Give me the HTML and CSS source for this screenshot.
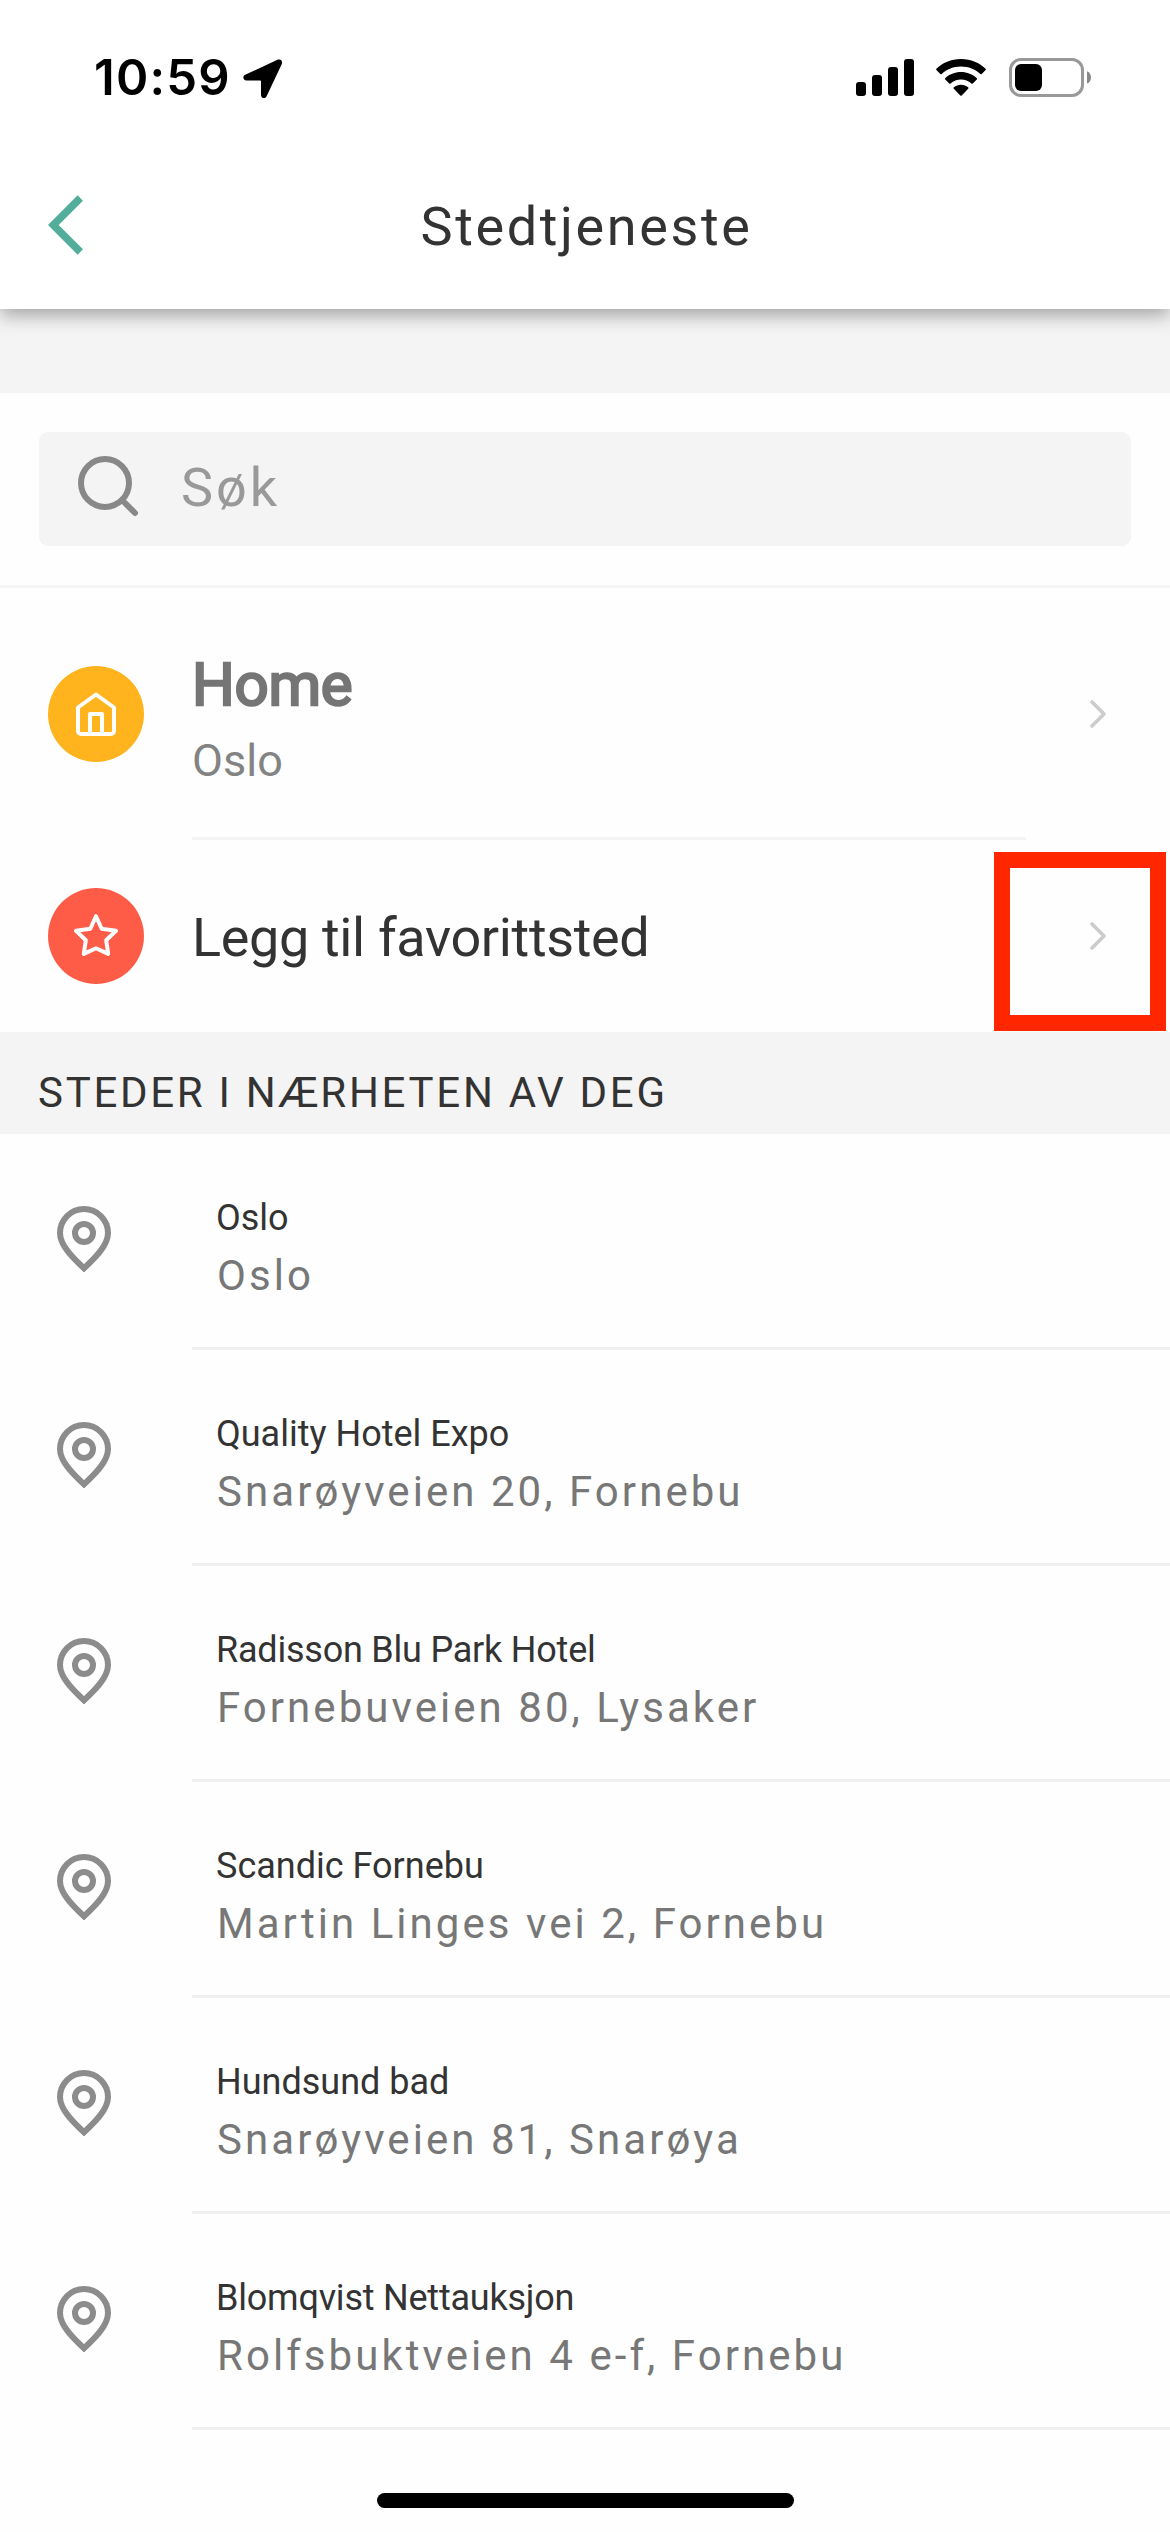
FILE: index.html
```html
<!DOCTYPE html>
<html lang="no">
<head>
<meta charset="utf-8">
<title>Stedtjeneste</title>
<link rel="stylesheet" href="styles.css">
</head>
<body>
<svg class="defs" aria-hidden="true">
  <symbol id="pin" viewBox="0 0 54 66"><path d="M27 62.3C20 55.500 3 41 3 27a24 24 0 0 1 48 0C51 41 34 55.500 27 62.300z"/><circle cx="27" cy="27" r="9"/></symbol>
  <symbol id="next" viewBox="0 0 18 30"><path d="M3 3l12 12L3 27"/></symbol>
</svg>
<div class="screen">
  <header class="header">
    <div class="status">
      <span class="clock">10:59</span>
      <svg class="location" width="40" height="40" viewBox="0 0 40 40"><path d="M2.200 15.700L34.500.8c3-1.200 5.500 1 4.300 4.200L23.600 37.200c-1.500 3-5.600 2.300-5.600-1.200V22.500c0-.8-.3-1.100-1.100-1.100H3.600C0 21.400-.9 17.100 2.200 15.700z"/></svg>
      <svg class="signal" width="58" height="38" viewBox="0 0 58 38"><rect y="23" width="10" height="14" rx="3"/><rect x="16" y="16" width="10" height="21" rx="3"/><rect x="32" y="8" width="10" height="29" rx="3"/><rect x="48" width="10" height="37" rx="3"/></svg>
      <svg class="wifi" width="50" height="38" viewBox="0 0 50 38"><path d="M25 0C35 0 43.500 3.800 49.600 9.800a1 1 0 0 1 0 1.300l-3.900 3.900a1 1 0 0 1-1.400 0C39.200 10.200 32.500 7.500 25 7.500S10.800 10.200 5.700 15a1 1 0 0 1-1.400 0L.4 11.100a1 1 0 0 1 0-1.300C6.500 3.800 15 0 25 0z"/><path d="M25 13c6.200 0 11.700 2.300 15.800 6.200a1 1 0 0 1 0 1.400l-4 3.900a1 1 0 0 1-1.400 0C32.500 21.900 29 20.400 25 20.400s-7.500 1.500-10.400 4.100a1 1 0 0 1-1.400 0l-4-3.900a1 1 0 0 1 0-1.400C13.300 15.300 18.800 13 25 13z"/><path d="M25 25.700c2.800 0 5.200 1 7.100 2.600a1 1 0 0 1 .1 1.500l-6.500 6.600a1 1 0 0 1-1.400 0l-6.500-6.600a1 1 0 0 1 .1-1.500c1.900-1.600 4.300-2.600 7.100-2.600z"/></svg>
      <svg class="battery" width="83" height="40" viewBox="0 0 83 40"><rect x="1.500" y="1.500" width="72" height="36" rx="10.500" fill="none" stroke="#999" stroke-width="3"/><rect x="6" y="6" width="27" height="27" rx="6"/><path fill="#888" d="M78 13.200c2.600 1 4 3.500 4 6.200s-1.400 5.200-4 6.200z"/></svg>
    </div>
    <div class="navbar">
      <svg class="back" width="36" height="62" viewBox="0 0 36 62"><path d="M32.300 4L5.300 31l27 27"/></svg>
      <h1 class="title">Stedtjeneste</h1>
    </div>
  </header>
  <main>
    <div class="search">
      <div class="field">
        <svg class="lens" width="62" height="62" viewBox="0 0 62 62"><circle cx="27" cy="27" r="24"/><path d="M44 44l13 13"/></svg>
        <span class="placeholder">Søk</span>
      </div>
    </div>
    <section class="saved">
      <div class="place home">
        <svg class="badge" width="96" height="96" viewBox="0 0 96 96"><circle class="yellow" cx="48" cy="48" r="48"/><path d="M30 41.500L48 28.500l18 13V65a3 3 0 0 1-3 3H33a3 3 0 0 1-3-3zM42 68V48h12v20"/></svg>
        <div class="info">
          <div class="home-name">Home</div>
          <div class="home-town">Oslo</div>
        </div>
        <svg class="next" width="18" height="30"><use href="#next"/></svg>
      </div>
      <div class="place favorite">
        <svg class="badge" width="96" height="96" viewBox="0 0 96 96"><circle class="red" cx="48" cy="48" r="48"/><path d="M48 28.200l5.700 12.600 14.300 1.900-9.800 9.500 2 13.700L48 60.200 35.800 65.900l2-13.700L28 42.700l14.300-1.900z"/></svg>
        <div class="info add">Legg til favorittsted</div>
        <svg class="next" width="18" height="30"><use href="#next"/></svg>
        <div class="highlight"></div>
      </div>
    </section>
    <h2 class="section">STEDER I NÆRHETEN AV DEG</h2>
    <ul class="nearby">
      <li class="row"><svg class="pin" width="54" height="66"><use href="#pin"/></svg><div class="text"><div class="name">Oslo</div><div class="address">Oslo</div></div></li>
      <li class="row"><svg class="pin" width="54" height="66"><use href="#pin"/></svg><div class="text"><div class="name">Quality Hotel Expo</div><div class="address">Snarøyveien 20, Fornebu</div></div></li>
      <li class="row"><svg class="pin" width="54" height="66"><use href="#pin"/></svg><div class="text"><div class="name tight">Radisson Blu Park Hotel</div><div class="address">Fornebuveien 80, Lysaker</div></div></li>
      <li class="row"><svg class="pin" width="54" height="66"><use href="#pin"/></svg><div class="text"><div class="name">Scandic Fornebu</div><div class="address">Martin Linges vei 2, Fornebu</div></div></li>
      <li class="row"><svg class="pin" width="54" height="66"><use href="#pin"/></svg><div class="text"><div class="name">Hundsund bad</div><div class="address">Snarøyveien 81, Snarøya</div></div></li>
      <li class="row"><svg class="pin" width="54" height="66"><use href="#pin"/></svg><div class="text"><div class="name tight">Blomqvist Nettauksjon</div><div class="address">Rolfsbuktveien 4 e-f, Fornebu</div></div></li>
    </ul>
  </main>
  <div class="home-bar"></div>
</div>
</body>
</html>
```
FILE: styles.css
```css
* { box-sizing: border-box; }
body { margin: 0; background: #fff; font-family: Roboto, "Liberation Sans", sans-serif; color: #333; }
h1, h2, ul { margin: 0; padding: 0; font-weight: 400; list-style: none; }
svg { display: block; flex: none; }
.defs { position: absolute; width: 0; height: 0; }
.screen { width: 1170px; height: 2532px; overflow: hidden; display: flex; flex-direction: column; background: #fefefe; }

.header { position: relative; height: 309px; background: #fff; box-shadow: 0 6px 18px rgba(0, 0, 0, .34); }
.status { display: flex; align-items: flex-start; height: 141px; padding: 58px 78px 0 94px; }
.clock { width: 149px; font: 600 49px/40px Inter, sans-serif; letter-spacing: 1.200px; color: #000; white-space: nowrap; }
.location { margin-top: 1px; }
.signal { margin: 1px 22px 0 auto; }
.wifi { margin: 1px 23px 0 0; }
.navbar { display: grid; grid-template-columns: 120px 1fr 120px; align-items: center; height: 168px; }
.back { margin-left: 48px; fill: none; stroke: #52ae9b; stroke-width: 7.500; }
.title { font-size: 54px; line-height: 64px; letter-spacing: 2.600px; text-align: center; padding: 4px 0 0 3px; }

.search { margin-top: 84px; height: 195px; padding: 39px; border-bottom: 3px solid #f4f4f4; position: relative; }
main { background: linear-gradient(#f4f4f4 84px, #fefefe 84px); display: flow-root; }
.field { display: flex; align-items: center; height: 114px; padding-left: 39px; background: #f4f4f4; border-radius: 9px; }
.lens { fill: none; stroke: #888; stroke-width: 6; stroke-linecap: round; margin-top: -4px; }
.placeholder { margin: -3px 0 0 41px; font-size: 54px; line-height: 64px; letter-spacing: 3px; color: #999; }

.place { display: grid; grid-template-columns: 144px 834px 18px; align-items: center; padding-left: 48px; position: relative; }
.home { height: 252px; }
.favorite { height: 192px; }
.badge path { fill: none; stroke: #fff; stroke-width: 4; stroke-linejoin: round; }
.yellow { fill: #ffb31c; }
.red { fill: #ff5c48; }
.home .info { height: 252px; border-bottom: 3px solid #f4f4f4; padding-top: 60px; }
.home-name { font-size: 60px; line-height: 74px; color: #757575; letter-spacing: -.3px; -webkit-text-stroke: 2.400px #757575; }
.home-town { font-size: 45px; line-height: 54px; margin-top: 12px; color: #838383; }
.add { font-size: 54px; line-height: 64px; letter-spacing: -.350px; padding-top: 3px; }
.next { fill: none; stroke: #ccc; stroke-width: 3.600; stroke-linecap: round; stroke-linejoin: round; margin-left: 63px; }
.highlight { position: absolute; left: 994px; top: 12px; width: 172px; height: 179px; border: 16px solid #ff2600; }

.section { height: 102px; padding: 32px 0 0 38px; background: #f4f4f4; font-size: 42px; line-height: 57px; letter-spacing: 2.700px; }
.row { display: flex; height: 216px; padding-left: 57px; }
.pin { margin-top: 72px; fill: none; stroke: #8c8c8c; stroke-width: 6; }
.text { flex: 1; margin-left: 81px; padding: 60px 0 0 24px; border-bottom: 3px solid #efefef; }
.name { font-size: 36px; line-height: 48px; }
.tight { letter-spacing: -.220px; }
.address { margin: 4px 0 0 1px; font-size: 42px; line-height: 60px; letter-spacing: 3.050px; color: #777; }
.home-bar { width: 417px; height: 15px; margin: 63px 0 0 377px; border-radius: 8px; background: #000; flex: none; }
```
